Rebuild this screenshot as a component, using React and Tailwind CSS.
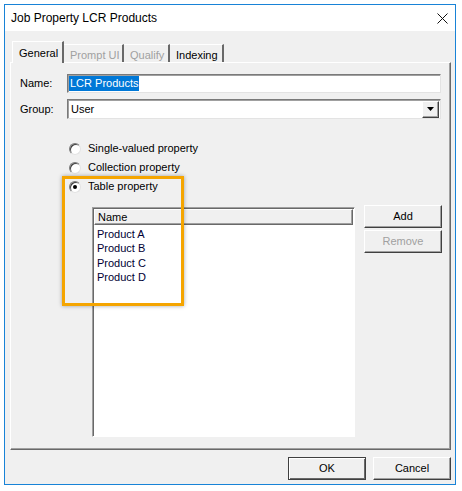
import React from "react";

function Radio({ checked, label }) {
  return (
    <div className="flex items-center h-[19px]">
      <div className="relative w-[12px] h-[12px] rounded-full bg-white border border-t-[#7a7a7a] border-l-[#7a7a7a] border-r-[#e3e3e3] border-b-[#e3e3e3] shadow-[inset_1px_1px_0_#404040]">
        {checked && (
          <div className="absolute left-[3px] top-[3px] w-[4px] h-[4px] rounded-full bg-black" />
        )}
      </div>
      <span className="ml-[7px]">{label}</span>
    </div>
  );
}

function Button({ children, disabled, isDefault, className = "" }) {
  return (
    <div
      className={
        "flex items-center justify-center h-[23px] w-[78px] bg-[#f0f0f0] " +
        (isDefault
          ? "border border-[#404040] shadow-[inset_1px_1px_0_#ffffff,inset_-1px_-1px_0_#696969] "
          : "border border-t-white border-l-white border-r-[#404040] border-b-[#404040] shadow-[inset_-1px_-1px_0_#a0a0a0] ") +
        (disabled ? "text-[#a0a0a0] " : "text-black ") +
        className
      }
    >
      {children}
    </div>
  );
}

export default function App() {
  const tabs = [
    { name: "Prompt UI", w: "w-[60px]", gray: true },
    { name: "Qualify", w: "w-[46px]", gray: true },
    { name: "Indexing", w: "w-[54px]", gray: false },
  ];
  return (
    <div
      className="relative w-[462px] h-[491px] bg-white overflow-hidden pt-[4px] pl-[4px] text-[11px] text-black"
      style={{ fontFamily: '"Liberation Sans", Arial, sans-serif' }}
    >
      <div className="w-[452px] h-[481px] border border-[#1883d7] flex flex-col">
        {/* title bar */}
        <div className="h-[26px] bg-white flex items-center justify-between pl-[6px] pr-[7px]">
          <span className="text-[12px]">Job Property LCR Products</span>
          <svg width="11" height="11" viewBox="0 0 11 11">
            <path d="M0.5 0.5 L10.5 10.5 M10.5 0.5 L0.5 10.5" stroke="#111" strokeWidth="1" />
          </svg>
        </div>

        <div className="flex-1 bg-[#f0f0f0] flex flex-col pl-[5px] pr-[4px] pt-[10px]">
          {/* tabs */}
          <div className="flex items-end h-[21px] pl-[2px]">
            <div className="relative z-10 w-[52px] h-[22px] -mb-[1px] pl-[6px] pt-[3px] bg-[#f0f0f0] border-t border-l border-t-white border-l-white border-r-2 border-r-[#696969]">
              General
            </div>
            {tabs.map((t) => (
              <div
                key={t.name}
                className={
                  t.w +
                  " h-[18px] pl-[6px] pt-[2px] border-t border-t-white border-r-2 border-r-[#696969] " +
                  (t.gray ? "text-[#a0a0a0]" : "text-black")
                }
              >
                {t.name}
              </div>
            ))}
          </div>

          {/* panel */}
          <div className="h-[388px] border border-t-white border-l-white border-r-[#696969] border-b-[#696969] shadow-[inset_-1px_-1px_0_#a0a0a0] flex flex-col pt-[11px] pl-[9px]">
            <div className="flex items-center h-[19px]">
              <span className="w-[47px]">Name:</span>
              <div className="w-[374px] h-[19px] bg-white border border-t-[#7a7a7a] border-l-[#7a7a7a] border-r-[#e3e3e3] border-b-[#e3e3e3] shadow-[inset_1px_1px_0_#a0a0a0] flex items-center pl-[1px]">
                <span className="bg-[#0078d7] text-white px-[1px] leading-[15px]">LCR Products</span>
              </div>
            </div>
            <div className="flex items-center h-[20px] mt-[6px]">
              <span className="w-[47px]">Group:</span>
              <div className="w-[374px] h-[20px] bg-white border border-t-[#7a7a7a] border-l-[#7a7a7a] border-r-[#e3e3e3] border-b-[#e3e3e3] shadow-[inset_1px_1px_0_#a0a0a0] flex items-center justify-between pl-[3px] pr-[1px]">
                <span>User</span>
                <div className="w-[17px] h-[17px] bg-[#f0f0f0] border border-t-white border-l-white border-r-[#404040] border-b-[#404040] shadow-[inset_-1px_-1px_0_#a0a0a0] flex items-center justify-center">
                  <svg width="7" height="4" viewBox="0 0 7 4">
                    <path d="M0 0 H7 L3.5 4 Z" fill="#000" />
                  </svg>
                </div>
              </div>
            </div>

            <div className="flex flex-col mt-[20px] pl-[49px]">
              <Radio label="Single-valued property" />
              <Radio label="Collection property" />
              <Radio checked label="Table property" />
            </div>

            <div className="flex mt-[11px] pl-[72px]">
              <div className="w-[263px] h-[230px] bg-white border border-t-[#a0a0a0] border-l-[#a0a0a0] border-r-white border-b-white shadow-[inset_1px_1px_0_#696969] flex flex-col pl-[1px] pt-[1px]">
                <div className="h-[16px] mr-[1px] bg-[#f0f0f0] border border-t-white border-l-white border-r-[#696969] border-b-[#696969] shadow-[inset_-1px_-1px_0_#a0a0a0] flex items-center pl-[3px]">
                  Name
                </div>
                <div className="flex flex-col pt-[2px] pl-[3px] text-[#000033]">
                  <div className="h-[14.3px] leading-[14.3px]">Product A</div>
                  <div className="h-[14.3px] leading-[14.3px]">Product B</div>
                  <div className="h-[14.3px] leading-[14.3px]">Product C</div>
                  <div className="h-[14.3px] leading-[14.3px]">Product D</div>
                </div>
              </div>
              <div className="flex flex-col ml-[9px] -mt-[2px] gap-[2px]">
                <Button>Add</Button>
                <Button disabled>Remove</Button>
              </div>
            </div>
          </div>

          {/* bottom buttons */}
          <div className="flex justify-end gap-[7px] mt-[7px]">
            <Button isDefault>OK</Button>
            <Button>Cancel</Button>
          </div>
        </div>
      </div>

      {/* annotation highlight */}
      <div className="absolute left-[62px] top-[176px] w-[122px] h-[130px] border-[3px] border-[#f5a500] shadow-[0_0_4px_rgba(0,0,0,0.35)]" />
    </div>
  );
}
